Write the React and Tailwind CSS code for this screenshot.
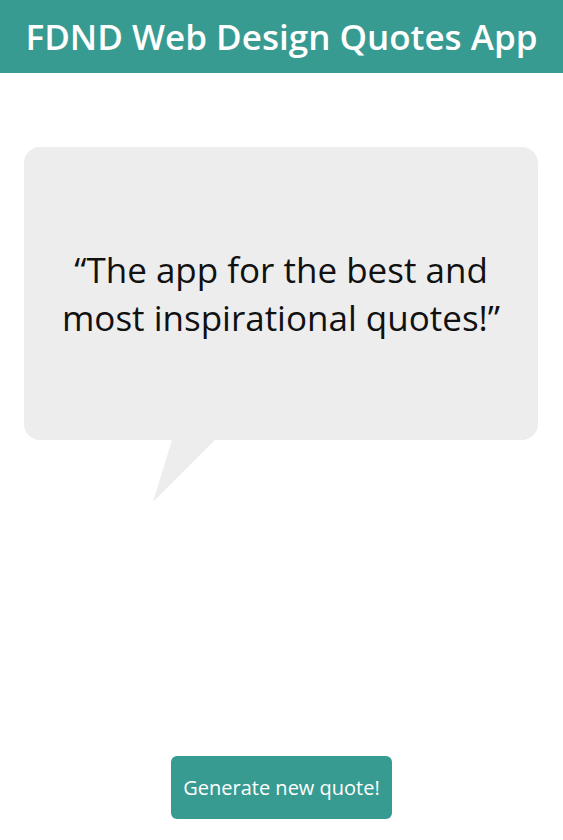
export default function App() {
  return (
    <div className="flex min-h-screen flex-col bg-white font-['Open_Sans',sans-serif]">
      <header className="flex h-[73px] items-center justify-center bg-[#389b92]">
        <h1 className="text-[35px] font-semibold leading-none text-white">
          FDND Web Design Quotes App
        </h1>
      </header>

      <main className="flex flex-1 flex-col pl-6 pr-[25px] pt-[74px]">
        <div className="flex h-[293px] items-center justify-center rounded-2xl bg-[#ededed] px-8">
          <p className="text-center text-[35px] leading-[48px] text-[#111]">
            “The app for the best and most inspirational quotes!”
          </p>
        </div>
        <svg width="64" height="62" viewBox="0 0 64 62" className="ml-[129px] block">
          <polygon points="19,0 62,0 0,62" fill="#ededed" />
        </svg>
      </main>

      <div className="flex justify-center pb-[21px]">
        <button className="h-[63px] rounded-md bg-[#389b92] px-3 text-[20px] text-white">
          Generate new quote!
        </button>
      </div>
    </div>
  );
}
